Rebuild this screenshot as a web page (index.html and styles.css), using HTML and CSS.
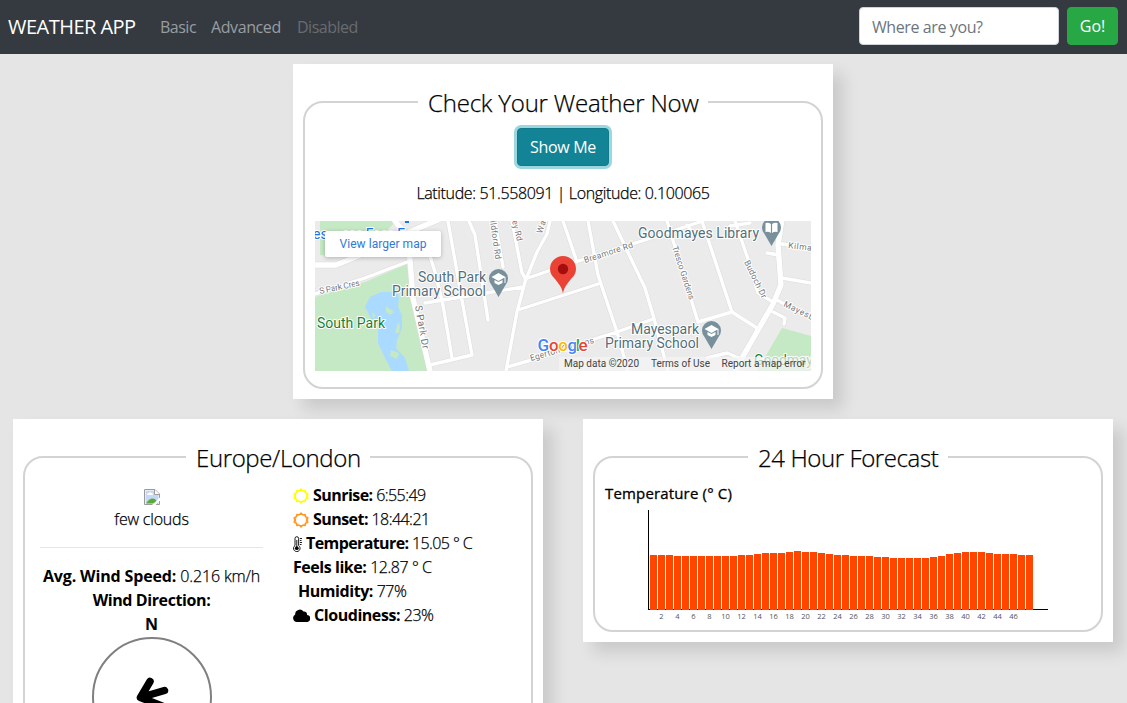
FILE: index.html
```html
<!DOCTYPE html>
<html lang="en">
<head>
<meta charset="utf-8">
<title>Weather App</title>
<link rel="stylesheet" href="styles.css">
</head>
<body>
<nav class="navbar">
  <a class="brand">WEATHER APP</a>
  <a class="nav-link basic">Basic</a>
  <a class="nav-link advanced">Advanced</a>
  <a class="nav-link disabled">Disabled</a>
  <form class="search"><input class="place" type="text" placeholder="Where are you?"><button class="go" type="button">Go!</button></form>
</nav>
<main>
  <section class="card card-check">
    <fieldset class="panel check">
      <legend class="t-check">Check Your Weather Now</legend>
      <button class="show" type="button">Show Me</button>
      <p class="coords">Latitude: 51.558091 | Longitude: 0.100065</p>
      <div class="map">
        <svg class="map-art" width="496" height="150" viewBox="0 0 496 150">
          <rect width="496" height="150" fill="#ebebeb"/>
          <g fill="#c5e8c5">
            <path d="M5 0H81L60 22L22 36L5 34Z"/>
            <path d="M0 76L50 61L92 43L96 77L114 150H0Z"/>
            <path d="M467 107L496 115V150H442Z"/>
          </g>
          <path d="M50 86L55 76L66 71L82 71L84 77L83 86L87 94V107L82 119L81 127L90 137L94 150H77L70 137L63 122V104L57 99Z" fill="#aadaff"/>
          <path d="M71 85L79 91L75 94L71 91ZM83 101L85 105L84 112H80ZM76 129L84 132L82 138L75 135ZM57 91L61 95L58 97Z" fill="#c5e8c5"/>
          <g fill="none" stroke="#dcdcdc" stroke-linejoin="round" stroke-linecap="round">
            <path stroke-width="4.400" d="M0 73L50 57L92 41M110 82L165 73L208 66M110 19L120 51L128 84L137 137M115 144L157 134L147 79L133 0M154 0L160 14L173 99M180 0L188 46M197 0L207 52L211 58M235 0L232 13L222 31L210 61L202 91L191 150M210 58L257 42L330 19L388 0M203 89L283 63M248 0L262 41M273 0L283 54L302 111L313 150M298 0L330 67L338 94L353 150M352 0L383 101M387 0L417 91M383 101L417 91L442 107M192 146L227 136L273 120L302 111L338 98M420 0L435 44L443 72L458 81M467 23L496 27M467 57L496 62M452 32L464 34M460 78L496 97M458 91L470 97L469 103M392 137L412 132L424 137M372 4L378 12M415 5L435 2"/>
            <path stroke-width="6.400" d="M-3 44H21L60 28L92 12L125 -2M80 0L92 15L95 39L98 77L115 150M467 -2L463 24L466 64L458 83L427 137L420 150"/>
          </g>
          <g fill="none" stroke="#fff" stroke-linejoin="round" stroke-linecap="round">
            <path stroke-width="3.400" d="M0 73L50 57L92 41M110 82L165 73L208 66M110 19L120 51L128 84L137 137M115 144L157 134L147 79L133 0M154 0L160 14L173 99M180 0L188 46M197 0L207 52L211 58M235 0L232 13L222 31L210 61L202 91L191 150M210 58L257 42L330 19L388 0M203 89L283 63M248 0L262 41M273 0L283 54L302 111L313 150M298 0L330 67L338 94L353 150M352 0L383 101M387 0L417 91M383 101L417 91L442 107M192 146L227 136L273 120L302 111L338 98M420 0L435 44L443 72L458 81M467 23L496 27M467 57L496 62M452 32L464 34M460 78L496 97M458 91L470 97L469 103M392 137L412 132L424 137M372 4L378 12M415 5L435 2"/>
            <path stroke-width="5.400" d="M-3 44H21L60 28L92 12L125 -2M80 0L92 15L95 39L98 77L115 150M467 -2L463 24L466 64L458 83L427 137L420 150"/>
          </g>
          <g class="street">
            <text transform="translate(5 73) rotate(-12)" textLength="41">S Park Cres</text>
            <text transform="translate(100 85) rotate(80)" textLength="44" font-size="10">S Park Dr</text>
            <text transform="translate(175 0) rotate(82)" textLength="39">ildford Rd</text>
            <text transform="translate(197 0) rotate(76)" textLength="21">ey Rd</text>
            <text transform="translate(227 13) rotate(-72)" textLength="13">Wa</text>
            <text transform="translate(270 42) rotate(-18)" textLength="51">Breamore Rd</text>
            <text transform="translate(357 26) rotate(72)" textLength="56">Tresco Gardens</text>
            <text transform="translate(429 41) rotate(64)" textLength="41">Budoch Dr</text>
            <text transform="translate(473 27) rotate(7)" textLength="27">Kilmar</text>
            <text transform="translate(468 85) rotate(26)" textLength="36">Mayesbr</text>
            <text transform="translate(216 140) rotate(-16)" textLength="66">Egerton Gardens</text>
          </g>
          <g class="poi">
            <text x="103" y="61" textLength="68">South Park</text>
            <text x="77" y="75" textLength="94">Primary School</text>
            <text x="323" y="17" textLength="121">Goodmayes Library</text>
            <text x="316" y="113" textLength="68">Mayespark</text>
            <text x="290" y="127" textLength="94">Primary School</text>
          </g>
          <g class="park"><text x="2" y="107" textLength="68">South Park</text><text x="439" y="144" textLength="66">Goodmaye</text></g>
          <text class="shop" x="-2" y="18">es</text><text class="shop" x="27" y="18" textLength="63">sso Foco F</text>
          <rect x="90" y="-1" width="4" height="3" fill="#1a73e8"/>
          <g transform="translate(183.500 58)">
            <path d="M0 18L-7 6A9.500 9.500 0 1 1 7 6Z" fill="#78909c"/>
            <path d="M-7 -2L0 -6L7 -2L0 2ZM-4 1V4L0 6L4 4V1L0 3ZM6 -2H7V4H6Z" fill="#fff"/>
          </g>
          <g transform="translate(396.500 110)">
            <path d="M0 18L-7 6A9.500 9.500 0 1 1 7 6Z" fill="#78909c"/>
            <path d="M-7 -2L0 -6L7 -2L0 2ZM-4 1V4L0 6L4 4V1L0 3ZM6 -2H7V4H6Z" fill="#fff"/>
          </g>
          <g transform="translate(456.500 7)">
            <path d="M0 18L-7 6A9.500 9.500 0 1 1 7 6Z" fill="#78909c"/>
            <path d="M-6 -5Q-3 -6 -.6 -4V5Q-3 3 -6 4ZM6 -5Q3 -6 .6 -4V5Q3 3 6 4Z" fill="#fff"/>
          </g>
          <path d="M248 72.500C247 66 243 62 240 58C237 55 235 52 235 48A13 13 0 0 1 261 48C261 52 259 55 256 58C253 62 249 66 248 72.500Z" fill="#ea4335"/>
          <circle cx="248" cy="48" r="5.200" fill="#a50e0e"/>
          <g class="google">
            <text x="222.500" y="129.500"><tspan fill="#4285f4">G</tspan><tspan x="234" fill="#ea4335">o</tspan><tspan x="243.200" fill="#fbbc04">o</tspan><tspan x="252.500" fill="#4285f4">g</tspan><tspan x="260.800" fill="#34a853">l</tspan><tspan x="263.500" fill="#ea4335">e</tspan></text>
          </g>
          <rect x="244" y="136" width="252" height="14" fill="#f5f5f5" fill-opacity=".7"/>
          <g class="legal">
            <text x="249" y="146" textLength="75">Map data ©2020</text>
            <text x="336" y="146" textLength="59">Terms of Use</text>
            <text x="406.500" y="146" textLength="84">Report a map error</text>
          </g>
        </svg>
        <a class="larger">View larger map</a>
      </div>
    </fieldset>
  </section>
  <div class="row">
    <section class="card half">
      <fieldset class="panel weather">
        <legend class="t-city">Europe/London</legend>
        <div class="wind">
          <svg class="missing" width="16" height="16" viewBox="0 0 16 16">
            <path d="M.5 .5H11L15.500 5V15.500H.5Z" fill="#fff" stroke="#9b9b9b"/>
            <path d="M1.500 1.500H10V6H14.500V14.500H1.500Z" fill="#c6d8f5"/>
            <path d="M3 6Q3 4 5 4Q6 2.500 7.500 4Q9 4 9 6Z" fill="#fff"/>
            <path d="M2 14.500Q7 7 12 11L14 14.500Z" fill="#5aac36"/>
            <path d="M10.500 .5V5.500H15.500" fill="#fff" stroke="#9b9b9b"/>
            <path d="M8 16L16 8.500V11.500L11.500 16Z" fill="#fff"/>
          </svg>
          <div class="line sky">few clouds</div>
          <hr>
          <div class="line speed"><b>Avg. Wind Speed:</b> 0.216 km/h</div>
          <div class="line direction"><b>Wind Direction:</b></div>
          <div class="line"><b>N</b></div>
          <div class="compass">
            <svg width="116" height="116" viewBox="0 0 116 116"><path d="M56 42.500L46.500 58.500L70.500 51.500M46.500 58.500L78 71" fill="none" stroke="#000" stroke-width="7.500" stroke-linecap="round" stroke-linejoin="round"/></svg>
          </div>
        </div>
        <div class="facts">
          <div class="line sunrise"><svg class="sun" width="16" height="16" viewBox="0 0 16 16"><path fill="none" stroke="#ff0" stroke-width="1.300" stroke-linejoin="round" d="M8 1L9.700 2.800L12.100 2.300L12.800 4.700L15 5.800L14.300 8L15 10.200L12.800 11.300L12.100 13.700L9.700 13.200L8 15L6.300 13.200L3.900 13.700L3.200 11.300L1 10.200L1.700 8L1 5.800L3.200 4.700L3.900 2.300L6.300 2.800Z"/><circle cx="8" cy="8" r="5.600" fill="none" stroke="#ff0"/></svg><b>Sunrise:</b> 6:55:49</div>
          <div class="line sunset"><svg class="sun" width="16" height="16" viewBox="0 0 16 16"><path fill="none" stroke="#ff9820" stroke-width="1.300" stroke-linejoin="round" d="M8 1L9.700 2.800L12.100 2.300L12.800 4.700L15 5.800L14.300 8L15 10.200L12.800 11.300L12.100 13.700L9.700 13.200L8 15L6.300 13.200L3.900 13.700L3.200 11.300L1 10.200L1.700 8L1 5.800L3.200 4.700L3.900 2.300L6.300 2.800Z"/><circle cx="8" cy="8" r="5.600" fill="none" stroke="#ff9820"/></svg><b>Sunset:</b> 18:44:21</div>
          <div class="line temp"><svg class="thermo" width="9" height="16" viewBox="0 0 9 16"><path d="M2 9.500V2.500A1.800 1.800 0 0 1 5.600 2.500V9.500A3.300 3.300 0 1 1 2 9.500Z" fill="#fff" stroke="#000" stroke-width=".9"/><circle cx="3.800" cy="12.200" r="1.900"/><path d="M3.800 4V12M6.800 2.500H9M6.800 4.500H8.500M6.800 6.500H9M6.800 8.500H8.500" stroke="#000" stroke-width=".9"/></svg><b>Temperature:</b> 15.05 ° C</div>
          <div class="line feels"><b>Feels like:</b> 12.87 ° C</div>
          <div class="line humidity"><b>Humidity:</b> 77%</div>
          <div class="line cloudy"><svg class="cloud" width="17" height="13" viewBox="0 0 17 13"><path d="M4 13A4 4 0 0 1 2.200 5.500A4.600 4.600 0 0 1 10.500 2.500A3 3 0 0 1 14 6A3.500 3.500 0 0 1 13.500 13Z"/></svg><b>Cloudiness:</b> 23%</div>
        </div>
      </fieldset>
    </section>
    <section class="card half">
      <fieldset class="panel forecast">
        <legend class="t-forecast">24 Hour Forecast</legend>
        <div class="chart-title">Temperature (° C)</div>
        <div class="chart" id="chart"></div>
        <div class="ticks" id="ticks"></div>
      </fieldset>
    </section>
  </div>
</main>
<script src="chart.js"></script>
</body>
</html>
```
FILE: styles.css
```css
* { box-sizing: border-box; }
html { overflow: hidden; }
body { margin: 0; height: 703px; overflow: hidden; background: #e5e5e5; color: #000; font: 300 16px/24px "Open Sans", "Noto Sans", sans-serif; }
b { font-weight: 700; -webkit-text-stroke: 0; }
legend, .coords, .line { -webkit-text-stroke: .25px #000; }
.navbar { display: flex; align-items: center; height: 54px; padding: 0 9px 0 8px; background: #343a40; }
.brand { width: 152px; color: #fff; font-size: 20px; font-weight: 400; letter-spacing: -.52px; white-space: nowrap; }
.nav-link { height: 25px; color: #9a9da0; font-weight: 400; white-space: nowrap; }
.basic { width: 51px; letter-spacing: -.5px; }
.advanced { width: 86px; letter-spacing: -.4px; }
.disabled { color: #686c71; letter-spacing: -.5px; }
.search { display: flex; gap: 8px; margin: 0 0 2px auto; }
.place { width: 200px; height: 38px; padding: 2px 12px 0; border: 1px solid #ced4da; border-radius: 4px; background: #fff; font: 400 16px "Open Sans", sans-serif; letter-spacing: -.4px; }
.place::placeholder { color: #6c757d; opacity: 1; }
.go { width: 51px; height: 38px; padding: 0; border: 1px solid #28a745; border-radius: 4px; background: #28a745; color: #fff; font: 400 16px "Open Sans", sans-serif; }
.card { padding: 20px 10px 10px; background: #fff; box-shadow: 10px 10px 15px rgba(0, 0, 0, .12); }
.card-check { width: 540px; height: 335px; margin: 10px 0 20px 293px; }
.panel { min-width: 0; margin: 0; padding: 0 10px; border: 2px solid #d3d3d3; border-radius: 20px; }
legend { height: 36px; margin: 0 auto; padding: 1px 10px 0; font-size: 24px; line-height: 36px; text-align: center; white-space: nowrap; }
.t-check { width: 290px; letter-spacing: -.2px; }
.t-city { width: 184px; letter-spacing: -.37px; }
.t-forecast { width: 200px; letter-spacing: -.4px; }
.check { height: 305px; text-align: center; }
.show { display: block; width: 92px; height: 38px; margin: 8px auto 0; padding: 0; border: 1px solid #117a8b; border-radius: 4px; background: #138496; box-shadow: 0 0 0 3px #9cd7e0; color: #fff; font: 400 16px "Open Sans", sans-serif; letter-spacing: -.3px; }
.coords { margin: 15px 0 16px; letter-spacing: -.37px; white-space: nowrap; }
.map { position: relative; width: 496px; height: 150px; overflow: hidden; }
.map-art { display: block; font-family: Roboto, sans-serif; font-weight: 400; }
.map-art text { paint-order: stroke; stroke: #fff; stroke-width: 2px; stroke-linejoin: round; }
.street { fill: #74777c; font-size: 8.5px; }
.poi { fill: #546e7a; font-size: 14px; }
.park { fill: #188038; font-size: 14px; }
.shop { fill: #1a73e8; font-size: 14px; }
.google { font-size: 17px; font-weight: 500; }
.legal { fill: #444; font-size: 10px; }
.map-art .legal text { stroke: none; }
.larger { position: absolute; left: 10px; top: 10px; width: 116px; height: 26px; border-radius: 2px; background: #fff; box-shadow: 0 1px 4px rgba(0, 0, 0, .25); color: #3079d8; font: 400 12px/26px Roboto, sans-serif; letter-spacing: .05px; }
.row { display: flex; gap: 40px; align-items: flex-start; margin-left: 13px; }
.half { width: 530px; }
.line { height: 24px; white-space: nowrap; }
.weather { height: 400px; padding: 8px 15px 0; }
.weather .wind { float: left; width: 223px; text-align: center; }
.missing { display: block; margin: 6px auto 2px; }
.sky { letter-spacing: -.2px; }
hr { margin: 16px 0 16px; border: 0; border-top: 1px solid #e5e5e5; }
.speed { letter-spacing: -.14px; }
.direction { letter-spacing: -.4px; }
.compass { width: 120px; height: 120px; margin: 1px auto 0; border: 2px solid #808080; border-radius: 50%; }
.facts { float: left; margin-left: 30px; letter-spacing: -.6px; }
.facts svg { vertical-align: -3px; }
.facts .cloud { vertical-align: -1px; }
.sunrise, .sunset { letter-spacing: -.55px; }
.feels, .cloudy, .humidity { letter-spacing: -.45px; }
.sun, .thermo, .cloud { margin-right: 4px; }
.humidity { padding-left: 5px; }
.forecast { height: 193px; }
.chart-title { height: 24px; margin: 6px 0 5px; font-size: 15px; font-weight: 400; letter-spacing: .16px; -webkit-text-stroke: .3px #000; }
.chart { display: flex; align-items: flex-end; gap: 1px; width: 400px; height: 100px; margin-left: 43px; padding-left: 1px; border-left: 1px solid #000; background: linear-gradient(#000, #000) bottom / 100% 1px no-repeat; }
.bar { width: 7px; background: #ff4500; }
.ticks { display: flex; height: 12px; margin-left: 48.5px; color: #555; font-size: 7.5px; font-weight: 400; line-height: 13px; }
.tick { width: 16px; text-align: center; }
```
FILE: chart.js
```js
const heights = [55,55,55,54,54,54,54,54,54,54,54,55,55,56,57,57,57,58,59,58,58,57,56,55,55,54,54,54,53,53,52,52,52,52,52,53,54,56,57,58,58,58,57,56,56,56,55,55];
const chart = document.getElementById('chart');
const ticks = document.getElementById('ticks');
heights.forEach((height) => {
  const bar = document.createElement('div');
  bar.className = 'bar';
  bar.style.height = height + 'px';
  chart.append(bar);
});
for (let hour = 2; hour <= 46; hour += 2) {
  const tick = document.createElement('span');
  tick.className = 'tick';
  tick.textContent = hour;
  ticks.append(tick);
}
```
